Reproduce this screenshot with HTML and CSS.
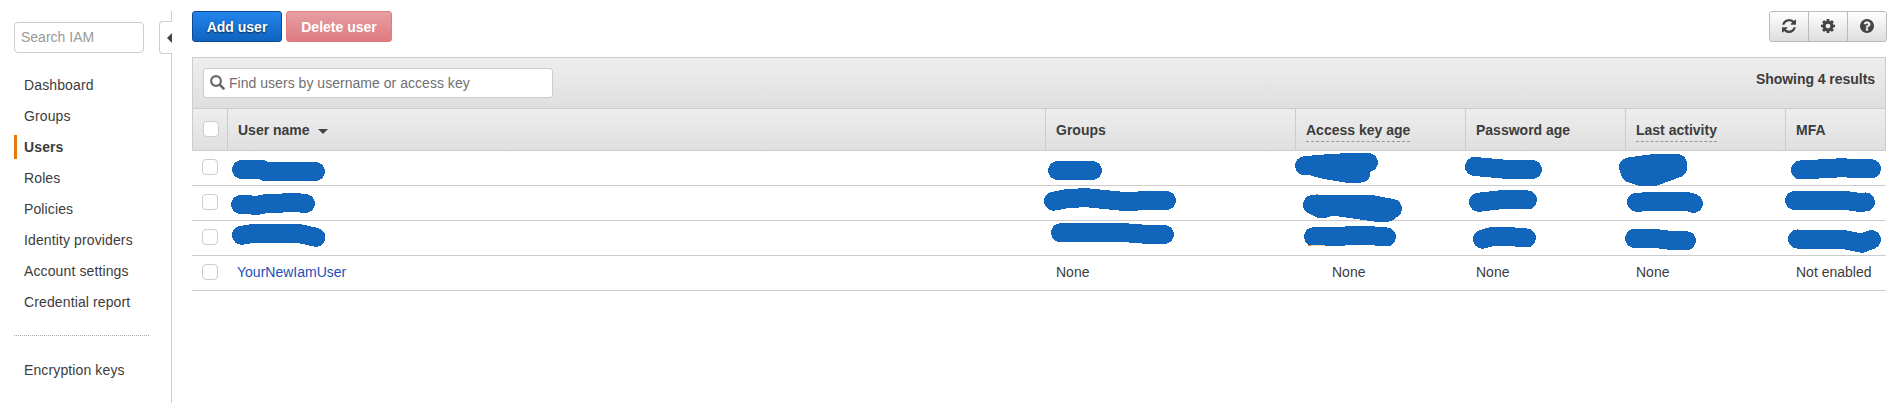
FILE: index.html
```html
<!DOCTYPE html>
<html lang="en">
<head>
<meta charset="utf-8">
<title>IAM Users</title>
<link rel="stylesheet" href="styles.css">
</head>
<body>
<div class="app">
  <aside class="sidebar">
    <input class="sidebar-search" type="text" placeholder="Search IAM">
    <nav class="nav">
      <a class="nav-item">Dashboard</a>
      <a class="nav-item">Groups</a>
      <a class="nav-item active">Users</a>
      <a class="nav-item">Roles</a>
      <a class="nav-item">Policies</a>
      <a class="nav-item">Identity providers</a>
      <a class="nav-item">Account settings</a>
      <a class="nav-item">Credential report</a>
    </nav>
    <svg class="divider" width="135" height="1"><path d="M0 .5H135" stroke="#aaa" stroke-dasharray="1 1"/></svg>
    <a class="nav-item">Encryption keys</a>
  </aside>
  <div class="rail">
    <div class="rail-top"></div>
    <div class="rail-toggle"><svg width="5" height="10" viewBox="0 0 5 10"><path d="M5 0V10L0 5Z" fill="#444"/></svg></div>
    <div class="rail-line"></div>
  </div>
  <main class="main">
    <div class="actions">
      <button class="btn btn-primary">Add user</button>
      <button class="btn btn-danger">Delete user</button>
      <div class="icon-group">
        <button class="icon-btn"><svg width="14" height="14" viewBox="0 0 1536 1536"><path fill="#444" d="M1511 928q0 5-1 7-64 268-268 434.500T764 1536q-146 0-282.500-55T238 1324l-129 129q-19 19-45 19t-45-19-19-45V960q0-26 19-45t45-19h448q26 0 45 19t19 45-19 45l-137 137q71 66 161 102t187 36q134 0 250-65t186-179q11-17 53-117 8-23 30-23h192q13 0 22.500 9.500t9.500 22.500zm25-800v448q0 26-19 45t-45 19h-448q-26 0-45-19t-19-45 19-45l138-138Q969 256 768 256q-134 0-250 65T332 500q-11 17-53 117-8 23-30 23H50q-13 0-22.500-9.500T18 608v-7q65-268 270-434.500T768 0q146 0 284 55.500T1297 212l130-129q19-19 45-19t45 19 19 45z"/></svg></button>
        <button class="icon-btn"><svg width="14" height="14" viewBox="0 0 1536 1536"><path fill="#444" d="M1024 768q0-106-75-181t-181-75-181 75-75 181 75 181 181 75 181-75 75-181zm512-109v222q0 12-8 23t-20 13l-185 28q-19 54-39 91 35 50 107 138 10 12 10 25t-9 23q-27 37-99 108t-94 71q-12 0-26-9l-138-108q-44 23-91 38-16 136-29 186-7 28-36 28H657q-14 0-24.500-8.500T621 1506l-28-184q-49-16-90-37l-141 107q-10 9-25 9-14 0-25-11-126-114-165-168-7-10-7-23 0-12 8-23 15-21 51-66.500t54-70.500q-27-50-41-99L29 913q-13-2-21-12.500T0 877V655q0-12 8-23t19-13l186-28q14-46 39-92-40-57-107-138-10-12-10-24 0-10 9-23 26-36 98.500-107.500T337 135q13 0 26 10l138 107q44-23 91-38 16-136 29-186 7-28 36-28h222q14 0 24.500 8.500T915 30l28 184q49 16 90 37l142-107q9-9 24-9 13 0 25 10 129 119 165 170 7 8 7 22 0 12-8 23-15 21-51 66.500t-54 70.500q26 50 41 98l183 28q13 2 21 12.500t8 23.500z"/></svg></button>
        <button class="icon-btn"><svg width="14" height="14" viewBox="0 0 1536 1536"><path fill="#444" d="M896 1248v-192q0-14-9-23t-23-9H672q-14 0-23 9t-9 23v192q0 14 9 23t23 9h192q14 0 23-9t9-23zm256-672q0-88-55.500-163T958 297t-170-41q-243 0-371 213-15 24 8 42l132 100q7 6 19 6 16 0 25-12 53-68 86-92 34-24 86-24 48 0 85.500 26t37.500 59q0 38-20 61t-68 45q-63 28-115.500 86.500T640 892v36q0 14 9 23t23 9h192q14 0 23-9t9-23q0-19 21.500-49.500T972 829q32-18 49-28.500t46-35 44.500-48 28-60.500 12.500-81zm384 192q0 209-103 385.500T1153.500 1433 768 1536t-385.500-103T103 1153.500 0 768t103-385.500T382.500 103 768 0t385.500 103T1433 382.500 1536 768z"/></svg></button>
      </div>
    </div>
    <section class="panel">
      <div class="filter">
        <div class="find">
          <svg width="15" height="15" viewBox="0 0 15 15"><circle cx="6" cy="6" r="4.9" fill="none" stroke="#666" stroke-width="2.1"/><path d="M9.700 9.700L13.500 13.500" stroke="#666" stroke-width="2.500" stroke-linecap="round"/></svg>
          <span>Find users by username or access key</span>
        </div>
        <div class="count">Showing 4 results</div>
      </div>
      <div class="row head">
        <div class="check"><i class="box"></i></div>
        <div>User name<svg class="caret" width="10" height="5" viewBox="0 0 10 5"><path d="M0 0H10L5 5Z" fill="#444"/></svg></div>
        <div>Groups</div>
        <div><span class="hint">Access key age</span></div>
        <div>Password age</div>
        <div><span class="hint">Last activity</span></div>
        <div>MFA</div>
      </div>
    </section>
    <div class="row"><div class="check"><i class="box"></i></div></div>
    <div class="row"><div class="check"><i class="box"></i></div></div>
    <div class="row"><div class="check"><i class="box"></i></div></div>
    <div class="row">
      <div class="check"><i class="box"></i></div>
      <div><a class="link">YourNewIamUser</a></div>
      <div>None</div>
      <div class="age">None</div>
      <div>None</div>
      <div>None</div>
      <div>Not enabled</div>
    </div>
  </main>
</div>
<svg class="redactions" width="1901" height="403" viewBox="0 0 1901 403">
  <g class="stroke">
    <path d="M241.500 169.500H262L265 171.500H315.500"/>
    <path d="M240.500 204.500L258 205.300L265 203.700L295 202.500L305.500 203.500"/>
    <path d="M241.500 235.300L253 233.500H299L316 237.300"/>
    <path d="M1057.500 170.500H1092.500"/>
    <path d="M1053.500 201.200L1065 199L1085 197.500L1122 201.300L1166.500 200.500"/>
    <path d="M1060.500 232.700H1125L1155 235L1164.500 234.500"/>
    <path d="M1313.500 236.700L1350 235.900L1375 236L1386.500 237"/>
    <path d="M1474.500 166.500L1508 169.500H1532.500"/>
    <path d="M1478.500 202.300L1500 199.800L1527.500 200"/>
    <path d="M1482.500 239.200L1492 236.500L1515 237L1526.500 238"/>
    <path d="M1636.500 202.200L1656 201.500L1690 202L1693.500 203.500"/>
    <path d="M1634.500 238.400L1658 238.800L1675 241L1686.500 240.700"/>
    <path d="M1800.500 170L1840 167.800L1871.500 168.800"/>
    <path d="M1794.500 200.500L1848 200.800L1858 202.200L1865.500 202"/>
    <path d="M1797.500 239L1808 240L1845 239.800L1862 243.200L1871.500 239.500"/>
  </g>
  <g class="stroke solid">
    <path d="M1304.500 165.700L1330 163.500L1350 162.500H1368.500H1358L1361 173H1345L1325 169.500L1315 167"/>
    <path d="M1312.500 204.700H1372L1392.500 208.500L1388 212.200H1376L1333 206L1321.700 209Z"/>
    <path d="M1628.500 167L1652 163.800L1677.500 163.500V168L1655 176.200H1640L1630.500 173Z"/>
  </g>
  <path d="M1316 194.500h2" stroke="#e47911"/>
  <path d="M1308 245.500h3" stroke="#e47911"/>
  <path d="M1311 245.500h14" stroke="#f8d5b5"/>
</svg>
</body>
</html>
```
FILE: styles.css
```css
* { box-sizing: border-box; }
body {
  margin: 0;
  background: #fff;
  color: #3c3c3c;
  font: 14px/20px "Liberation Sans", Arial, sans-serif;
}
.app { display: flex; height: 403px; overflow: hidden; }

.sidebar { width: 159px; padding: 22px 0 0 14px; }
.sidebar-search {
  display: block;
  width: 130px;
  height: 31px;
  padding: 0 6px 2px;
  border: 1px solid #ccc;
  border-radius: 4px;
  font: inherit;
  color: #444;
}
.sidebar-search::placeholder { color: #999; }
.nav { display: flex; flex-direction: column; gap: 7px; margin-top: 20px; }
.nav-item {
  display: block;
  height: 24px;
  padding-left: 10px;
  line-height: 25px;
  letter-spacing: .12px;
  white-space: nowrap;
}
.nav > .nav-item { border-left: 3px solid transparent; padding-left: 7px; }
.nav > .active { border-left-color: #e47911; font-weight: bold; }
.divider { display: block; margin: 21px 0 22px; }

.rail { display: flex; flex-direction: column; width: 13px; padding-top: 11px; }
.rail-top { height: 10px; border-right: 1px solid #ccc; }
.rail-toggle {
  display: flex;
  align-items: center;
  justify-content: flex-end;
  height: 33px;
  border: 1px solid #ccc;
  border-right: 0;
  border-radius: 4px 0 0 4px;
}
.rail-line { flex: 1; border-right: 1px solid #ccc; }

.main { width: 1694px; margin-left: 20px; padding-top: 11px; }
.actions { display: flex; height: 31px; margin-right: -1px; }
.btn {
  height: 31px;
  padding: 0;
  border: 1px solid;
  border-radius: 3px;
  color: #fff;
  font: bold 14px "Liberation Sans", Arial, sans-serif;
}
.btn-primary {
  width: 90px;
  margin-right: 4px;
  border-color: #0c4b92;
  background: linear-gradient(#2385ec, #1063c0);
  text-shadow: 0 1px 2px rgba(0, 0, 0, .7);
}
.btn-danger {
  width: 106px;
  border-color: #dd7e83;
  background: linear-gradient(#e79fa3, #de7a80);
}
.icon-group {
  display: flex;
  width: 118px;
  margin-left: auto;
  border: 1px solid #bbb;
  border-radius: 3px;
  background: linear-gradient(#fff, #ddd);
}
.icon-btn {
  display: flex;
  flex: 1;
  align-items: center;
  justify-content: center;
  padding: 0 0 1px;
  border: 0;
  background: none;
}
.icon-btn + .icon-btn { border-left: 1px solid #bbb; }

.panel { margin-top: 15px; border: 1px solid #ccc; border-bottom: 0; }
.filter {
  display: flex;
  justify-content: space-between;
  height: 50px;
  padding: 10px 10px 0;
  background: linear-gradient(#eee, #dfdfdf);
}
.find {
  display: flex;
  align-items: center;
  gap: 4px;
  width: 350px;
  height: 30px;
  padding: 0 6px 1px;
  border: 1px solid #ccc;
  border-radius: 3px;
  background: #fff;
  color: #707070;
  letter-spacing: .03px;
}
.count { font-weight: bold; line-height: 22px; letter-spacing: -.04px; }
.row {
  display: grid;
  grid-template-columns: 36px 818px 250px 170px 160px 160px 100px;
  height: 35px;
  border-bottom: 1px solid #ccc;
  line-height: 33px;
}
.row > div { padding-left: 10px; white-space: nowrap; }
.row > div:nth-child(2) { padding-left: 9px; }
.row > .age { padding-left: 36px; }
.row > .check { display: flex; align-items: flex-start; padding: 8px 0 0 10px; }
.box {
  width: 16px;
  height: 16px;
  border: 1px solid #ccc;
  border-radius: 4px;
  background: #fff;
}
.row.head {
  grid-template-columns: 34px 818px 250px 170px 160px 160px 100px;
  height: 43px;
  border-top: 1px solid #ccc;
  background: linear-gradient(#eee, #dfdfdf);
  font-weight: bold;
  line-height: 42px;
}
.head > div + div { border-left: 1px solid #ccc; }
.head > div:nth-child(2) { padding-left: 10px; }
.row.head > .check { padding-top: 12px; }
.caret { margin-left: 8px; vertical-align: 1px; }
.hint {
  display: inline-block;
  height: 22px;
  border-bottom: 1px dashed #999;
  line-height: 20px;
}
.link { color: #1a50b8; }

.redactions { position: absolute; left: 0; top: 0; pointer-events: none; }
.stroke {
  fill: none;
  stroke: #1166bb;
  stroke-width: 19;
  stroke-linecap: round;
  stroke-linejoin: round;
  shape-rendering: crispEdges;
}
.solid { fill: #1166bb; }
```
